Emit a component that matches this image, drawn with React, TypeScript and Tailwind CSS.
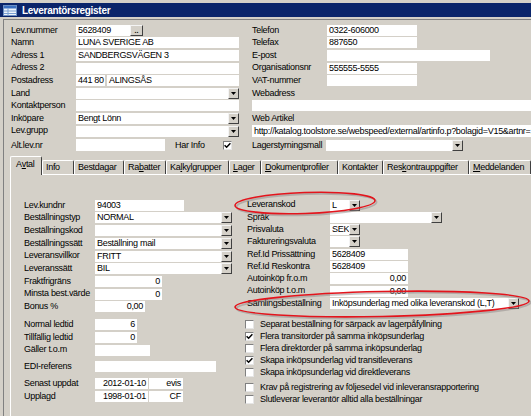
import React from "react";

type Kids = { children?: React.ReactNode; className?: string };

function Tri() {
  return (
    <svg width="5" height="3" viewBox="0 0 5 3">
      <path d="M0 0H5L2.5 3Z" fill="#000" />
    </svg>
  );
}

function DropBtn() {
  return (
    <div className="flex h-[11px] w-[11px] shrink-0 items-center justify-center border border-t-[#f4f4f4] border-l-[#f4f4f4] border-r-[#404040] border-b-[#404040] bg-[#d4d0c8]">
      <Tri />
    </div>
  );
}

function Box({ className = "", children, right = false }: Kids & { right?: boolean }) {
  return (
    <div
      className={`flex h-[11px] shrink-0 items-center overflow-hidden whitespace-nowrap bg-white px-[2px] leading-[11px] ${
        right ? "justify-end" : ""
      } ${className}`}
    >
      {children}
    </div>
  );
}

function Combo({ className = "", children }: Kids) {
  return (
    <div className={`flex h-[11px] shrink-0 bg-white ${className}`}>
      <div className="flex-1 overflow-hidden whitespace-nowrap px-[2px] leading-[11px]">{children}</div>
      <DropBtn />
    </div>
  );
}

function Check({ on = false }: { on?: boolean }) {
  return (
    <div className="flex h-[9px] w-[9px] shrink-0 items-center justify-center border border-t-[#808080] border-l-[#808080] border-b-[#e6e6e6] border-r-[#e6e6e6] bg-white">
      {on && (
        <svg width="7" height="7" viewBox="0 0 7 7">
          <path d="M0.6 3.2L2.6 5.2L6.4 1.2" stroke="#000" strokeWidth="1.5" fill="none" />
        </svg>
      )}
    </div>
  );
}

// top part of the window: rows of 12.6px
function TopRow({ label, wide = false, children }: { label?: string; wide?: boolean; children?: React.ReactNode }) {
  return (
    <div className="flex h-[12.6px] items-center">
      {label !== undefined && (
        <div className={`${wide ? "w-[75px]" : "w-[65px]"} shrink-0 whitespace-nowrap`}>{label}</div>
      )}
      {children}
    </div>
  );
}

function LeftRow({ label, children }: { label: string; children?: React.ReactNode }) {
  return (
    <div className="flex h-[12.7px] items-center">
      <div className="w-[71px] shrink-0 whitespace-nowrap">{label}</div>
      {children}
    </div>
  );
}

function RightRow({ label, children }: { label: string; children?: React.ReactNode }) {
  return (
    <div className="flex h-[12.3px] items-center">
      <div className="w-[83px] shrink-0 whitespace-nowrap">{label}</div>
      {children}
    </div>
  );
}

function CheckRow({ on = false, children }: { on?: boolean; children: React.ReactNode }) {
  return (
    <div className="ml-[-2px] flex h-[12px] items-center gap-[6px] whitespace-nowrap">
      <Check on={on} />
      <span>{children}</span>
    </div>
  );
}

const tabs: { label: React.ReactNode; w: string }[] = [
  { label: <>Info</>, w: "w-[32px]" },
  { label: <>Bestdagar</>, w: "w-[50px]" },
  { label: <>Ra<u>b</u>atter</>, w: "w-[42px]" },
  { label: <>Ka<u>l</u>kylgrupper</>, w: "w-[63px]" },
  { label: <><u>L</u>ager</>, w: "w-[32px]" },
  { label: <><u>D</u>okumentprofiler</>, w: "w-[77px]" },
  { label: <>Kontakter</>, w: "w-[45px]" },
  { label: <>Res<u>k</u>ontrauppgifter</>, w: "w-[86px]" },
  { label: <><u>M</u>eddelanden</>, w: "w-[62px]" },
];

function TitleIcon() {
  return (
    <svg width="14" height="11" viewBox="0 0 14 11">
      <rect x="0.5" y="0.5" width="13" height="10" fill="#eef4fb" stroke="#6b8fc4" />
      <rect x="1" y="1" width="12" height="2.5" fill="#3a6fc0" />
      <path d="M1 6H13M1 8.5H13M5 3.5V10.5" stroke="#7aa0d4" strokeWidth="1" />
    </svg>
  );
}

export default function App() {
  return (
    <div className="relative h-[416px] w-[531px] overflow-hidden bg-[#d4d0c8] font-['Liberation_Sans',Arial,sans-serif] text-[9px] tracking-[-0.3px] text-black">
      {/* title bar */}
      <div className="mt-[3px] flex h-[14px] items-center bg-[#0a246a] pl-[3px]">
        <TitleIcon />
        <span className="ml-[5px] text-[10px] font-bold tracking-[-0.3px] text-white">Leverantörsregister</span>
      </div>

      <div className="ml-[3px] mt-[2px] h-full border-l border-t border-[#808080]">
        {/* header fields */}
        <div className="flex pl-[7px] pt-[4px]">
          <div className="w-[229px] shrink-0">
            <TopRow label="Lev.nummer">
              <Box className="w-[54px]">5628409</Box>
              <div className="flex h-[11px] w-[13px] items-center justify-center border border-t-[#f4f4f4] border-l-[#f4f4f4] border-r-[#404040] border-b-[#404040] bg-[#d4d0c8] text-[7px] font-bold leading-none tracking-normal">
                ..
              </div>
            </TopRow>
            <TopRow label="Namn">
              <Box className="w-[163px]">LUNA SVERIGE AB</Box>
            </TopRow>
            <TopRow label="Adress 1">
              <Box className="w-[163px]">SANDBERGSVÄGEN 3</Box>
            </TopRow>
            <TopRow label="Adress 2">
              <Box className="w-[163px]" />
            </TopRow>
            <TopRow label="Postadress">
              <Box className="w-[29px]">441 80</Box>
              <Box className="ml-[2px] w-[132px]">ALINGSÅS</Box>
            </TopRow>
            <TopRow label="Land">
              <Combo className="w-[163px]" />
            </TopRow>
            <TopRow label="Kontaktperson">
              <Box className="w-[163px]" />
            </TopRow>
            <TopRow label="Inköpare">
              <Combo className="w-[163px]">Bengt Lönn</Combo>
            </TopRow>
            <TopRow label="Lev.grupp">
              <Combo className="w-[163px]" />
            </TopRow>
            <div className="mt-[1.6px] flex h-[13px] items-center">
              <div className="w-[65px] shrink-0">Alt.lev.nr</div>
              <Box className="h-[12px] w-[89px]" />
              <div className="ml-[10px] w-[48px] shrink-0">Har Info</div>
              <Check on />
            </div>
          </div>

          <div className="ml-[12px] flex-1">
            <TopRow label="Telefon" wide>
              <Box className="w-[90px]">0322-606000</Box>
            </TopRow>
            <TopRow label="Telefax" wide>
              <Box className="w-[90px]">887650</Box>
            </TopRow>
            <TopRow label="E-post" wide>
              <Box className="w-[163px]" />
            </TopRow>
            <TopRow label="Organisationsnr" wide>
              <Box className="w-[90px]">555555-5555</Box>
            </TopRow>
            <TopRow label="VAT-nummer" wide>
              <Box className="w-[90px]" />
            </TopRow>
            <TopRow label="Webadress" wide />
            <TopRow>
              <Box className="w-full" />
            </TopRow>
            <TopRow label="Web Artikel" wide />
            <TopRow>
              <Box className="h-[12px] w-full">
                http://katalog.toolstore.se/webspeed/external/artinfo.p?bolagid=V15&amp;artnr=1001
              </Box>
            </TopRow>
            <div className="mt-[1.6px] flex h-[13px] items-center">
              <div className="w-[74px] shrink-0">Lagerstyrningsmall</div>
              <Combo className="w-[137px]" />
            </div>
          </div>
        </div>

        {/* tabs */}
        <div className="relative z-10 ml-[6px] mt-[4px] flex h-[18px] items-end">
          <div className="mb-[-1px] flex h-[19px] w-[36px] items-center rounded-t-[2px] border-l border-t border-r border-l-white border-t-white border-r-[#404040] bg-[#d4d0c8] pb-[2px] pl-[5px]">
            A<u>v</u>tal
          </div>
          {tabs.map((t, i) => (
            <div
              key={i}
              className={`flex h-[14px] ${t.w} shrink-0 items-center whitespace-nowrap rounded-t-[2px] border-l border-t border-r border-l-white border-t-white border-r-[#404040] pl-[3px]`}
            >
              {t.label}
            </div>
          ))}
        </div>

        {/* tab panel */}
        <div className="ml-[6px] flex h-full border-l border-t border-white pl-[13px] pt-[24px]">
          <div className="w-[223px] shrink-0">
            <LeftRow label="Lev.kundnr">
              <Box className="w-[89px]">94003</Box>
            </LeftRow>
            <LeftRow label="Beställningstyp">
              <Combo className="w-[137px]">NORMAL</Combo>
            </LeftRow>
            <LeftRow label="Beställningskod">
              <Combo className="w-[137px]" />
            </LeftRow>
            <LeftRow label="Beställningssätt">
              <Combo className="w-[137px]">Beställning mail</Combo>
            </LeftRow>
            <LeftRow label="Leveransvillkor">
              <Combo className="w-[137px]">FRITT</Combo>
            </LeftRow>
            <LeftRow label="Leveranssätt">
              <Combo className="w-[137px]">BIL</Combo>
            </LeftRow>
            <LeftRow label="Fraktfrigräns">
              <Box className="w-[67px]" right>0</Box>
            </LeftRow>
            <LeftRow label="Minsta best.värde">
              <Box className="w-[67px]" right>0</Box>
            </LeftRow>
            <LeftRow label="Bonus %">
              <Box className="w-[50px]" right>0,00</Box>
            </LeftRow>

            <div className="mt-[5.4px]">
              <LeftRow label="Normal ledtid">
                <Box className="w-[42px]" right>6</Box>
              </LeftRow>
              <LeftRow label="Tillfällig ledtid">
                <Box className="w-[42px]" right>0</Box>
              </LeftRow>
              <LeftRow label="Gäller t.o.m">
                <Box className="w-[55px]" />
              </LeftRow>
            </div>

            <div className="mt-[3.9px]">
              <LeftRow label="EDI-referens">
                <Box className="w-[121px]" />
              </LeftRow>
            </div>

            <div className="mt-[4.3px]">
              <LeftRow label="Senast uppdat">
                <Box className="w-[53px] bg-[#ccffcc]" right>2012-01-10</Box>
                <Box className="ml-[1px] w-[34px] bg-[#ccffcc]" right>evis</Box>
              </LeftRow>
              <LeftRow label="Upplagd">
                <Box className="w-[53px] bg-[#ccffcc]" right>1998-01-01</Box>
                <Box className="ml-[1px] w-[34px] bg-[#ccffcc]" right>CF</Box>
              </LeftRow>
            </div>
          </div>

          <div className="flex-1">
            <RightRow label="Leveranskod">
              <Combo className="w-[30px]">L</Combo>
            </RightRow>
            <RightRow label="Språk">
              <Combo className="w-[112px]" />
            </RightRow>
            <RightRow label="Prisvaluta">
              <Combo className="w-[30px]">SEK</Combo>
            </RightRow>
            <RightRow label="Faktureringsvaluta">
              <Combo className="w-[30px]" />
            </RightRow>
            <RightRow label="Ref.Id Prissättning">
              <Box className="w-[78px]">5628409</Box>
            </RightRow>
            <RightRow label="Ref.Id Reskontra">
              <Box className="w-[78px]">5628409</Box>
            </RightRow>
            <RightRow label="Autoinköp fr.o.m">
              <Box className="w-[78px]" right>0,00</Box>
            </RightRow>
            <RightRow label="Autoinköp t.o.m">
              <Box className="w-[78px]" right>0,00</Box>
            </RightRow>
            <RightRow label="Samlingsbeställning">
              <Combo className="w-[189px]">Inköpsunderlag med olika leveranskod (L,T)</Combo>
            </RightRow>

            <div className="mt-[9.3px]">
              <CheckRow>Separat beställning för särpack av lagerpåfyllning</CheckRow>
              <CheckRow on>Flera transitorder på samma inköpsunderlag</CheckRow>
              <CheckRow>Flera direktorder på samma inköpsunderlag</CheckRow>
              <CheckRow on>Skapa inköpsunderlag vid transitleverans</CheckRow>
              <CheckRow>Skapa inköpsunderlag vid direktleverans</CheckRow>
            </div>
            <div className="mt-[3px]">
              <CheckRow>Krav på registrering av följesedel vid inleveransrapportering</CheckRow>
              <CheckRow>Slutleverar leverantör alltid alla beställningar</CheckRow>
            </div>
          </div>
        </div>
      </div>

      {/* red annotation ellipses */}
      <svg className="pointer-events-none absolute left-0 top-0" width="531" height="416">
        <g fill="none">
          <ellipse cx="306.5" cy="204.5" rx="70" ry="10.5" transform="rotate(-2 306.5 204.5)" stroke="#8a8080" strokeOpacity="0.45" strokeWidth="2" />
          <ellipse cx="305" cy="203" rx="70" ry="10.5" transform="rotate(-2 305 203)" stroke="#e3141c" strokeWidth="1.6" />
          <ellipse cx="383.5" cy="305.5" rx="147" ry="12.5" transform="rotate(-1.2 383.5 305.5)" stroke="#8a8080" strokeOpacity="0.45" strokeWidth="2" />
          <ellipse cx="382" cy="304" rx="147" ry="12.5" transform="rotate(-1.2 382 304)" stroke="#e3141c" strokeWidth="1.6" />
        </g>
      </svg>
    </div>
  );
}
